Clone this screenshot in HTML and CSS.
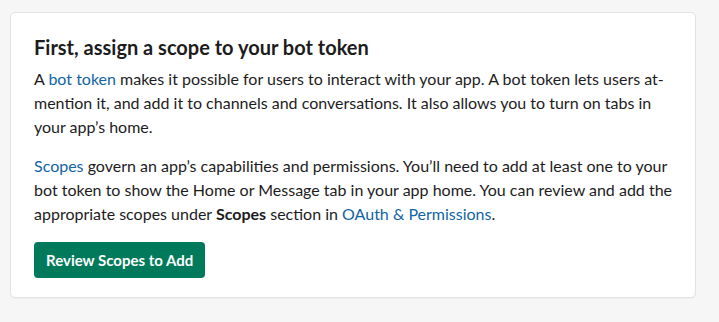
FILE: index.html
```html
<!DOCTYPE html>
<html lang="en">
<head>
  <meta charset="UTF-8">
  <meta name="viewport" content="width=device-width, initial-scale=1.0">
  <title>App Home</title>
  <link rel="stylesheet" href="styles.css">
</head>
<body>
  <div class="page">
    <!-- Scope card -->
    <section class="scope-card">
      <h2 class="scope-title">First, assign a scope to your bot token</h2>
      <p class="scope-text">
        A <a href="#" class="link">bot token</a> makes it possible for users to interact with your app. A bot token lets users at-mention it, and add it to channels and conversations. It also allows you to turn on tabs in your app’s home.
      </p>
      <p class="scope-text">
        <a href="#" class="link">Scopes</a> govern an app’s capabilities and permissions. You’ll need to add at least one to your bot token to show the Home or Message tab in your app home. You can review and add the appropriate scopes under <strong>Scopes</strong> section in <a href="#" class="link">OAuth &amp; Permissions</a>.
      </p>
      <button type="button" class="primary-button">Review Scopes to Add</button>
    </section>
  </div>
</body>
</html>
```

FILE: styles.css
```css
body {
  font-family: 'Lato', 'Noto Sans', sans-serif;
  margin: 0;
  padding: 0;
  background: #f6f6f6;
  color: #1d1c1d;
}

.page {
  padding: 12px 23px 12px 10px;
}

/* Card */
.scope-card {
  background: #ffffff;
  border: 1px solid #e2e2e2;
  border-radius: 5px;
  padding: 20px 23px 19px;
  box-shadow: 0 1px 1px rgba(0, 0, 0, 0.03);
}

.scope-title {
  font-size: 20px;
  font-weight: 700;
  line-height: 28px;
  margin: 0 0 6px;
}

.scope-text {
  font-size: 16px;
  line-height: 24px;
  margin: 0 0 15px;
}

.scope-text strong {
  font-weight: 700;
}

.link {
  color: #1264a3;
  text-decoration: none;
}

/* Button */
.primary-button {
  display: inline-flex;
  align-items: center;
  height: 36px;
  padding: 0 12px;
  margin-top: 1px;
  font-family: 'Lato', 'Noto Sans', sans-serif;
  font-size: 15px;
  font-weight: 700;
  color: #ffffff;
  background: #007a5a;
  border: none;
  border-radius: 4px;
  cursor: pointer;
}
```
